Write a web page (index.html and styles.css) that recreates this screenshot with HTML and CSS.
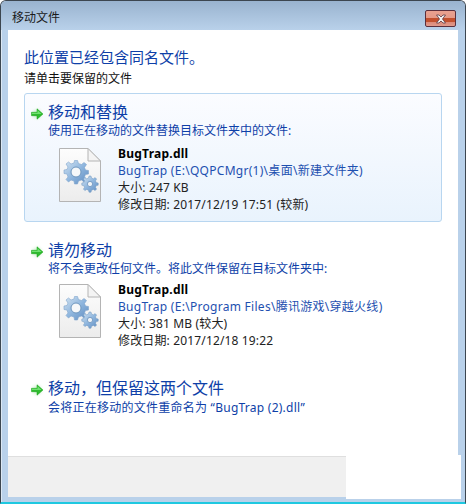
FILE: index.html
```html
<!DOCTYPE html>
<html lang="zh-CN">
<head>
<meta charset="utf-8">
<title>移动文件</title>
<link rel="stylesheet" href="styles.css">
</head>
<body>
<svg class="defs" width="0" height="0" aria-hidden="true">
  <defs>
    <linearGradient id="page" x1="0" y1="0" x2="0" y2="1"><stop offset="0" stop-color="#fdfdfd"/><stop offset="1" stop-color="#ececec"/></linearGradient>
    <linearGradient id="gear" x1="0" y1="0" x2="1" y2="1"><stop offset="0" stop-color="#d6e5f2"/><stop offset=".5" stop-color="#8fb6de"/><stop offset="1" stop-color="#5f8cc0"/></linearGradient>
    <radialGradient id="glow"><stop offset="0" stop-color="#8fdc8f" stop-opacity=".9"/><stop offset="1" stop-color="#ffffff" stop-opacity="0"/></radialGradient>
    <symbol id="arrow" viewBox="0 0 16 16">
      <ellipse cx="8" cy="8" rx="8" ry="8" fill="url(#glow)"/>
      <path d="M2.5 6.3H8V2.8L14 8l-6 5.2V9.7H2.5z" fill="#2fbb2f" stroke="#17a017" stroke-width=".5"/>
      <path d="M3 6.8H8.5V4.2L12.6 8H3z" fill="#6fe06f"/>
    </symbol>
    <symbol id="file" viewBox="0 0 42 54">
      <path d="M.5.5H29L41.500 13V53.500H.5z" fill="url(#page)" stroke="#b4b4b4"/>
      <path d="M29 .5V13H41.500z" fill="#f4f4f4" stroke="#b4b4b4"/>
      <g transform="translate(0.500 -5.500)">
        <path d="M15 18l3 0 1 3 3 1 2.500-2 2.500 2-2 3 1 2.500 3 .5v3.500l-3 .5-1 2.500 2 2.500-2.500 2.500-2.500-2-3 1-1 3h-3l-.5-3-3-1-2.500 2-2.500-2.500 2-2.500-1-3-3-.5v-3.500l3-.5 1-2.500-2-3 2.500-2 2.500 2 3-1z" fill="url(#gear)" stroke="#7fa5cc" stroke-width=".6"/>
        <circle cx="16.500" cy="29.500" r="5" fill="#f6f8fa" stroke="#6f97bf" stroke-width="1"/>
      </g>
      <g transform="translate(0 -6)">
        <path d="M30 34l2 0 .5 2 2 .8 1.600-1.200 1.500 1.500-1.100 1.700.7 1.800 2 .4v2.200l-2 .4-.7 1.800 1.100 1.700-1.500 1.500-1.600-1.200-2 .8-.5 2h-2l-.5-2-2-.8-1.600 1.200-1.500-1.500 1.100-1.700-.7-1.800-2-.4v-2.200l2-.4.7-1.800-1.100-1.700 1.500-1.500 1.600 1.200 2-.8z" fill="url(#gear)" stroke="#6f97bf" stroke-width=".5"/>
        <circle cx="31" cy="42" r="2.600" fill="#f0f4f8" stroke="#5f88b4" stroke-width=".7"/>
      </g>
    </symbol>
  </defs>
</svg>
<div class="window">
  <header class="titlebar">
    <span class="title">移动文件</span>
    <button class="close" type="button" aria-label="关闭"><svg width="14" height="10" viewBox="0 0 14 10"><path d="M2.500 1h2.500L7 3l2-2h2.500L8.500 5l3 4H9L7 7 5 9H2.500l3-4z" fill="#f2f2f2" stroke="#5a3a45" stroke-width=".8"/></svg></button>
  </header>
  <div class="client">
    <main class="content">
      <h1 class="heading">此位置已经包含同名文件。</h1>
      <p class="prompt">请单击要保留的文件</p>

      <section class="option option-hot">
        <div class="option-head"><svg class="arrow"><use href="#arrow"/></svg><h2 class="option-title">移动和替换</h2></div>
        <p class="option-desc">使用正在移动的文件替换目标文件夹中的文件:</p>
        <div class="file">
          <svg class="file-icon"><use href="#file"/></svg>
          <div class="file-info">
            <div class="file-name">BugTrap.dll</div>
            <div class="file-path">BugTrap (E:\QQPCMgr(1)\桌面\新建文件夹)</div>
            <div class="file-meta">大小: 247 KB</div>
            <div class="file-meta">修改日期: 2017/12/19 17:51 (较新)</div>
          </div>
        </div>
      </section>

      <section class="option option-second">
        <div class="option-head"><svg class="arrow"><use href="#arrow"/></svg><h2 class="option-title">请勿移动</h2></div>
        <p class="option-desc">将不会更改任何文件。将此文件保留在目标文件夹中:</p>
        <div class="file file-tight">
          <svg class="file-icon"><use href="#file"/></svg>
          <div class="file-info">
            <div class="file-name">BugTrap.dll</div>
            <div class="file-path">BugTrap (E:\Program Files\腾讯游戏\穿越火线)</div>
            <div class="file-meta">大小: 381 MB (较大)</div>
            <div class="file-meta">修改日期: 2017/12/18 19:22</div>
          </div>
        </div>
      </section>

      <section class="option option-third">
        <div class="option-head"><svg class="arrow"><use href="#arrow"/></svg><h2 class="option-title">移动，但保留这两个文件</h2></div>
        <p class="option-desc">会将正在移动的文件重命名为 “BugTrap (2).dll”</p>
      </section>
    </main>
    <footer class="footer"></footer>
  </div>
  <div class="patch"></div>
</div>
</body>
</html>
```
FILE: styles.css
```css
* { box-sizing: border-box; }
html, body { margin: 0; padding: 0; }
body {
  width: 466px;
  height: 504px;
  overflow: hidden;
  background: #fff;
  font-family: "Noto Sans", "Noto Sans CJK SC", sans-serif;
  font-size: 12px;
}
.defs { position: absolute; }
.window {
  position: relative;
  width: 466px;
  height: 504px;
  display: flex;
  flex-direction: column;
  background: #b9d1ea;
  border: 1px solid #3c4650;
  border-width: 1px 1px 0 1px;
  border-radius: 6px 6px 0 0;
  box-shadow: inset 1px 0 0 #dce8f4;
  border-bottom: 2px solid #1fc8e0;
}
.titlebar {
  height: 29px;
  flex: none;
  display: flex;
  align-items: flex-start;
  justify-content: space-between;
  padding: 9px 9px 0 11px;
  background: linear-gradient(#99b3cf, #b9d1ea);
  border-radius: 5px 5px 0 0;
}
.title {
  font-size: 12px;
  line-height: 16px;
  color: #1a1a1a;
}
.close {
  width: 31px;
  height: 17px;
  padding: 0;
  border: 1px solid #5a2f3c;
  border-radius: 2px;
  display: flex;
  align-items: center;
  justify-content: center;
  background: linear-gradient(#e9a190 0, #e59a88 45%, #c2502e 50%, #c2502e 70%, #dd8a78 75%, #e09a8c 100%);
}
.client {
  flex: 1;
  min-height: 0;
  display: flex;
  flex-direction: column;
  margin: 0 7px 5px 7px;
  background: #fff;
}
.content {
  flex: 1;
  min-height: 0;
  padding: 16px 16px 0 16px;
}
.heading {
  margin: 0;
  font-size: 15px;
  font-weight: 400;
  line-height: 22px;
  color: #0e3fa8;
}
.prompt {
  margin: 0;
  padding-top: 2px;
  font-size: 12px;
  line-height: 18px;
  color: #111;
}
.option-hot {
  margin-top: 5px;
  height: 129px;
  padding: 7px 0 0 4px;
  border: 1px solid #b8d6f0;
  border-radius: 3px;
  background: linear-gradient(#fbfcff, #e9f3fd);
}
.option-second { margin-top: 17px; padding-left: 5px; }
.option-third { margin-top: 28px; padding-left: 5px; }
.option-head {
  display: flex;
  align-items: center;
  gap: 3px;
  height: 22px;
}
.arrow { width: 16px; height: 16px; flex: none; margin-top: 3px; }
.option-title {
  margin: 0;
  font-size: 16px;
  font-weight: 400;
  line-height: 22px;
  color: #0e3fa8;
  white-space: nowrap;
}
.option-desc {
  margin: 0;
  padding-left: 19px;
  font-size: 12px;
  line-height: 16px;
  color: #0e3fa8;
}
.option-third .option-desc { padding-top: 1px; letter-spacing: .25px; }
.file {
  display: flex;
  margin-top: 1px;
  padding: 5px 0 0 30px;
}
.file-tight { padding-top: 3px; }
.file-icon { width: 42px; height: 54px; flex: none; margin-top: 3px; }
.file-info { margin-left: 17px; }
.file-name, .file-path, .file-meta { line-height: 17px; font-size: 12px; white-space: nowrap; }
.file-name { font-weight: 700; color: #000; letter-spacing: .25px; }
.file-path { color: #1e50b0; letter-spacing: .28px; }
.file-meta { color: #222; letter-spacing: .15px; }
.footer {
  flex: none;
  height: 41px;
  background: #f0f0f0;
  border-top: 1px solid #dfdfdf;
}
.patch {
  position: absolute;
  left: 345px;
  top: 454px;
  width: 115px;
  height: 44px;
  background: #fff;
}
```
